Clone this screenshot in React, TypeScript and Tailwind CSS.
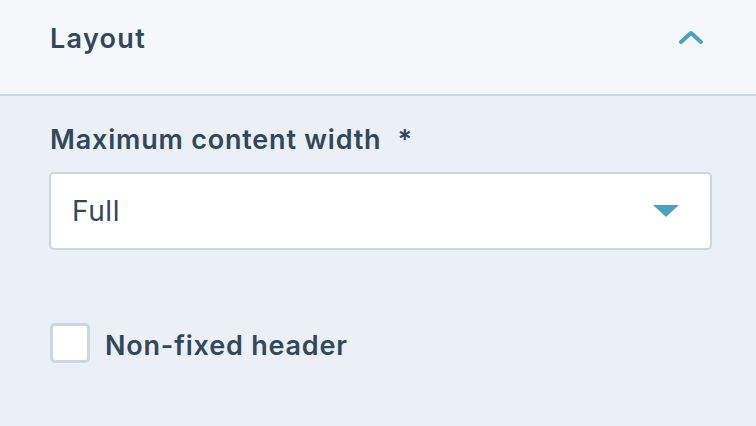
import React from "react";

export default function App() {
  return (
    <div className="w-[756px] h-[426px] bg-[#eaf0f6] text-[#33475b] overflow-hidden" style={{ fontFamily: "Inter, 'Noto Sans', sans-serif" }}>
      <div className="h-[96px] bg-[#f5f8fa] border-b-2 border-[#cbd6e2] flex items-center justify-between pl-[50px] pr-[52px] pb-[18px]">
        <span className="text-[27px] font-semibold leading-none tracking-[1.3px]">Layout</span>
        <svg width="26" height="16" viewBox="0 0 26 16">
          <path d="M3 12 L13 3 L23 12" fill="none" stroke="#4ba2bc" strokeWidth="4" strokeLinecap="round" strokeLinejoin="round" />
        </svg>
      </div>
      <div className="px-[49px] pt-[30px]">
        <div className="text-[27px] font-semibold leading-none pl-[1px] h-[26px] flex items-center tracking-[0.8px]">
          <span>Maximum content width</span>
          <span className="ml-[16px]">*</span>
        </div>
        <div className="mt-[20px] w-[663px] h-[78px] bg-white border-2 border-[#cbd6e2] rounded-[5px] flex items-center justify-between pl-[21px] pr-[31px]">
          <span className="text-[28px] leading-none tracking-[0.6px]">Full</span>
          <svg width="26" height="12" viewBox="0 0 26 12">
            <path d="M0 0 L26 0 L13 12 Z" fill="#4ba2bc" />
          </svg>
        </div>
        <div className="mt-[73px] flex items-center pl-[1px]">
          <div className="w-[40px] h-[40px] bg-white border-[3px] border-[#cbd6e2] rounded-[5px]" />
          <span className="ml-[15px] text-[27px] font-semibold leading-none mt-[4px] tracking-[0.8px]">Non-fixed header</span>
        </div>
      </div>
    </div>
  );
}
